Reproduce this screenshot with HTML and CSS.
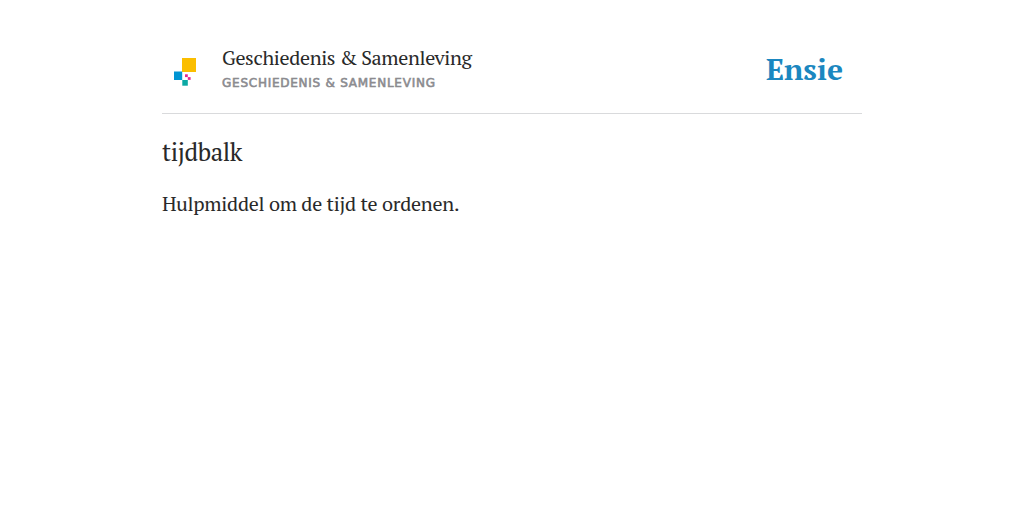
FILE: index.html
```html
<!doctype html>
<html lang="nl">

<head>
  <meta charset="UTF-8">
  <title>tijdbalk - Geschiedenis &amp; Samenleving</title>
  <link rel="stylesheet" href="styles.css">
</head>

<body>
  <div class="container">
    <header class="header">
      <svg class="icon" width="60" height="60" viewBox="0 0 60 60">
        <rect x="20" y="18" width="14" height="14" fill="#fbbe00" />
        <rect x="12" y="31.5" width="8.2" height="8.5" fill="#0095d3" />
        <rect x="20.3" y="40" width="5.5" height="5.7" fill="#0ba9a4" />
        <rect x="23" y="34.3" width="2.8" height="2.8" fill="#e5278f" />
        <rect x="25.8" y="37.1" width="2.8" height="2.8" fill="#e5278f" />
      </svg>
      <div class="titles">
        <div class="title">Geschiedenis &amp; Samenleving</div>
        <div class="subtitle">Geschiedenis &amp; Samenleving</div>
      </div>
      <div class="logo">Ensie</div>
    </header>

    <h1>tijdbalk</h1>
    <p class="definition">Hulpmiddel om de tijd te ordenen.</p>
  </div>
</body>

</html>
```

FILE: styles.css
```css
body {
  margin: 0;
  background: #fff;
  color: #292929;
  font-family: "PT Serif", "Liberation Serif", serif;
}

.container {
  width: 700px;
  margin: 0 auto;
  padding-top: 40px;
}

.header {
  display: flex;
  height: 73px;
  border-bottom: 1px solid #d9dadc;
}

.titles {
  flex: 1;
  padding-top: 4px;
}

.title {
  font-size: 20px;
  line-height: 28px;
  letter-spacing: -0.35px;
}

.subtitle {
  color: #8b8b8f;
  font: normal 12px/22px "DejaVu Sans", sans-serif;
  letter-spacing: 0.75px;
  text-transform: uppercase;
  -webkit-text-stroke: 0.6px #8b8b8f;
}

.logo {
  padding: 9px 19px 0 0;
  color: #1b87c0;
  font-size: 30px;
  font-weight: bold;
  line-height: 40px;
}

h1 {
  margin: 21px 0 0;
  font-size: 24.5px;
  font-weight: normal;
  line-height: 34px;
  letter-spacing: -0.35px;
}

.definition {
  margin: 21px 0 0;
  font-size: 20px;
  line-height: 28px;
  letter-spacing: -0.26px;
}
```
